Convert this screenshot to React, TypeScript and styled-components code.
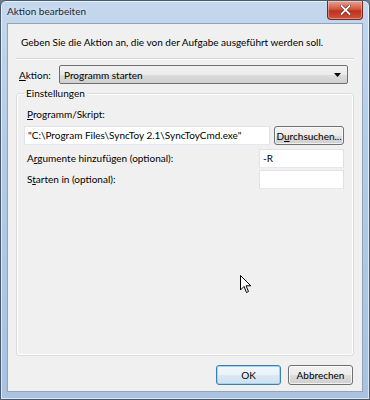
import React from "react";
import styled, { createGlobalStyle } from "styled-components";

const GlobalStyle = createGlobalStyle`
  html, body {
    margin: 0;
    padding: 0;
    background: #6b7f95;
  }
  body {
    font-family: Lato, "Open Sans", Arial, sans-serif;
    font-size: 10px;
    color: #000;
  }
`;

const Window = styled.div`
  width: 370px;
  height: 400px;
  box-sizing: border-box;
  border: 1px solid #4a5a6e;
  border-radius: 6px 6px 0 0;
  background: linear-gradient(180deg, #c4d7ed 0%, #b3cbe6 40%, #a9c2df 100%);
  display: flex;
  flex-direction: column;
  padding: 0 6px 7px 6px;
  box-shadow: inset 0 0 0 1px rgba(255, 255, 255, 0.6);
`;

const TitleBar = styled.div`
  height: 22px;
  display: flex;
  align-items: center;
  justify-content: space-between;
  flex-shrink: 0;
`;

const Title = styled.span`
  color: #1b2633;
  margin-top: -2px;
  text-shadow: 0 0 6px rgba(255, 255, 255, 0.9);
`;

const CloseButton = styled.div`
  width: 34px;
  height: 18px;
  margin-top: -4px;
  border: 1px solid #6d2a22;
  border-top: none;
  border-radius: 0 0 4px 4px;
  background: linear-gradient(180deg, #e8a494 0%, #d2573f 45%, #c0311d 55%, #d0523a 100%);
  display: flex;
  align-items: center;
  justify-content: center;
  box-shadow: inset 0 0 0 1px rgba(255, 255, 255, 0.35);
`;

const Client = styled.div`
  flex: 1;
  background: #f0f0f0;
  border: 1px solid #8ea4bd;
  display: flex;
  flex-direction: column;
  padding: 8px 8px 6px 8px;
  min-height: 0;
`;

const Intro = styled.div`
  padding-left: 5px;
  height: 20px;
  line-height: 20px;
`;

const Separator = styled.div`
  height: 1px;
  background: #d5d5d5;
  border-bottom: 1px solid #fff;
  margin: 6px 0 5px 0;
`;

const ActionRow = styled.div`
  display: flex;
  align-items: center;
  gap: 4px;
  padding-left: 3px;
`;

const ActionLabel = styled.span`
  width: 36px;
`;

const Combo = styled.div`
  flex: 1;
  height: 19px;
  margin-right: 6px;
  box-sizing: border-box;
  border: 1px solid #707070;
  border-radius: 2px;
  background: linear-gradient(180deg, #f2f2f2 0%, #ebebeb 50%, #dddddd 51%, #cfcfcf 100%);
  display: flex;
  align-items: center;
  justify-content: space-between;
  padding: 0 6px 0 4px;
`;

const GroupBox = styled.fieldset`
  flex: 1;
  margin: 3px 0 0 0;
  padding: 7px 9px 0 7px;
  border: 1px solid #dcdcdc;
  border-radius: 3px;
  box-shadow: inset 0 0 0 1px #fff;
  min-width: 0;
  display: flex;
  flex-direction: column;
`;

const Legend = styled.legend`
  padding: 0 2px;
`;

const FieldLabel = styled.div`
  padding-left: 3px;
  height: 17px;
  line-height: 17px;
`;

const PathRow = styled.div`
  display: flex;
  gap: 4px;
  margin-top: 3px;
  align-items: center;
`;

const TextBox = styled.div<{ $width?: number }>`
  box-sizing: border-box;
  height: 19px;
  border: 1px solid #abadb3;
  border-top-color: #e2e3ea;
  border-left-color: #e2e3ea;
  border-right-color: #dbdfe6;
  border-bottom-color: #e3e9ef;
  background: #fff;
  padding: 0 3px;
  line-height: 17px;
  white-space: nowrap;
  overflow: hidden;
  flex: ${(p) => (p.$width ? "none" : "1")};
  width: ${(p) => (p.$width ? `${p.$width}px` : "auto")};
`;

const Button = styled.div<{ $default?: boolean }>`
  box-sizing: border-box;
  height: 19px;
  border: 1px solid ${(p) => (p.$default ? "#3c7fb1" : "#707070")};
  border-radius: 3px;
  background: ${(p) =>
    p.$default
      ? "linear-gradient(180deg, #f2f7fb 0%, #eaf2f8 50%, #dbe8f2 51%, #cfe0ee 100%)"
      : "linear-gradient(180deg, #f2f2f2 0%, #ebebeb 50%, #dddddd 51%, #cfcfcf 100%)"};
  box-shadow: inset 0 0 0 1px ${(p) => (p.$default ? "#9fd5f0" : "rgba(255,255,255,0.7)")};
  display: flex;
  align-items: center;
  justify-content: center;
  white-space: nowrap;
`;

const BrowseButton = styled(Button)`
  width: 70px;
  flex: none;
`;

const OptionRow = styled.div<{ $top: number }>`
  display: flex;
  align-items: center;
  justify-content: space-between;
  margin-top: ${(p) => p.$top}px;
`;

const Canvas = styled.div`
  flex: 1;
  position: relative;
`;

const Cursor = styled.svg`
  position: absolute;
  left: 216px;
  top: 86px;
`;

const Footer = styled.div`
  display: flex;
  justify-content: flex-end;
  gap: 7px;
  padding: 9px 1px 0 0;
`;

const DialogButton = styled(Button)`
  width: 65px;
  height: 20px;
`;

const U = styled.span`
  text-decoration: underline;
`;

export default function App() {
  return (
    <>
      <GlobalStyle />
      <Window>
        <TitleBar>
          <Title>Aktion bearbeiten</Title>
          <CloseButton>
            <svg width="11" height="10" viewBox="0 0 11 10">
              <path
                d="M1.5 1 L9.5 9 M9.5 1 L1.5 9"
                stroke="#5a1a10"
                strokeWidth="3"
                strokeLinecap="square"
              />
              <path
                d="M1.5 1 L9.5 9 M9.5 1 L1.5 9"
                stroke="#fff"
                strokeWidth="1.8"
                strokeLinecap="square"
              />
            </svg>
          </CloseButton>
        </TitleBar>
        <Client>
          <Intro>Geben Sie die Aktion an, die von der Aufgabe ausgeführt werden soll.</Intro>
          <Separator />
          <ActionRow>
            <ActionLabel>
              <U>A</U>ktion:
            </ActionLabel>
            <Combo>
              <span>Programm starten</span>
              <svg width="7" height="4" viewBox="0 0 7 4">
                <path d="M0 0 H7 L3.5 4 Z" fill="#000" />
              </svg>
            </Combo>
          </ActionRow>
          <GroupBox>
            <Legend>Einstellungen</Legend>
            <FieldLabel>
              <U>P</U>rogramm/Skript:
            </FieldLabel>
            <PathRow>
              <TextBox>"C:\Program Files\SyncToy 2.1\SyncToyCmd.exe"</TextBox>
              <BrowseButton>
                D<U>u</U>rchsuchen...
              </BrowseButton>
            </PathRow>
            <OptionRow $top={4}>
              <FieldLabel>
                A<U>r</U>gumente hinzufügen (optional):
              </FieldLabel>
              <TextBox $width={85}>-R</TextBox>
            </OptionRow>
            <OptionRow $top={2}>
              <FieldLabel>
                S<U>t</U>arten in (optional):
              </FieldLabel>
              <TextBox $width={85} />
            </OptionRow>
            <Canvas>
              <Cursor width="12" height="19" viewBox="0 0 12 19">
                <path
                  d="M0.5 0.5 V15 L4 11.5 L6.5 17.5 L8.5 16.5 L6 10.8 H10.8 Z"
                  fill="#fff"
                  stroke="#000"
                  strokeWidth="1"
                />
              </Cursor>
            </Canvas>
          </GroupBox>
          <Footer>
            <DialogButton $default>OK</DialogButton>
            <DialogButton>Abbrechen</DialogButton>
          </Footer>
        </Client>
      </Window>
    </>
  );
}
